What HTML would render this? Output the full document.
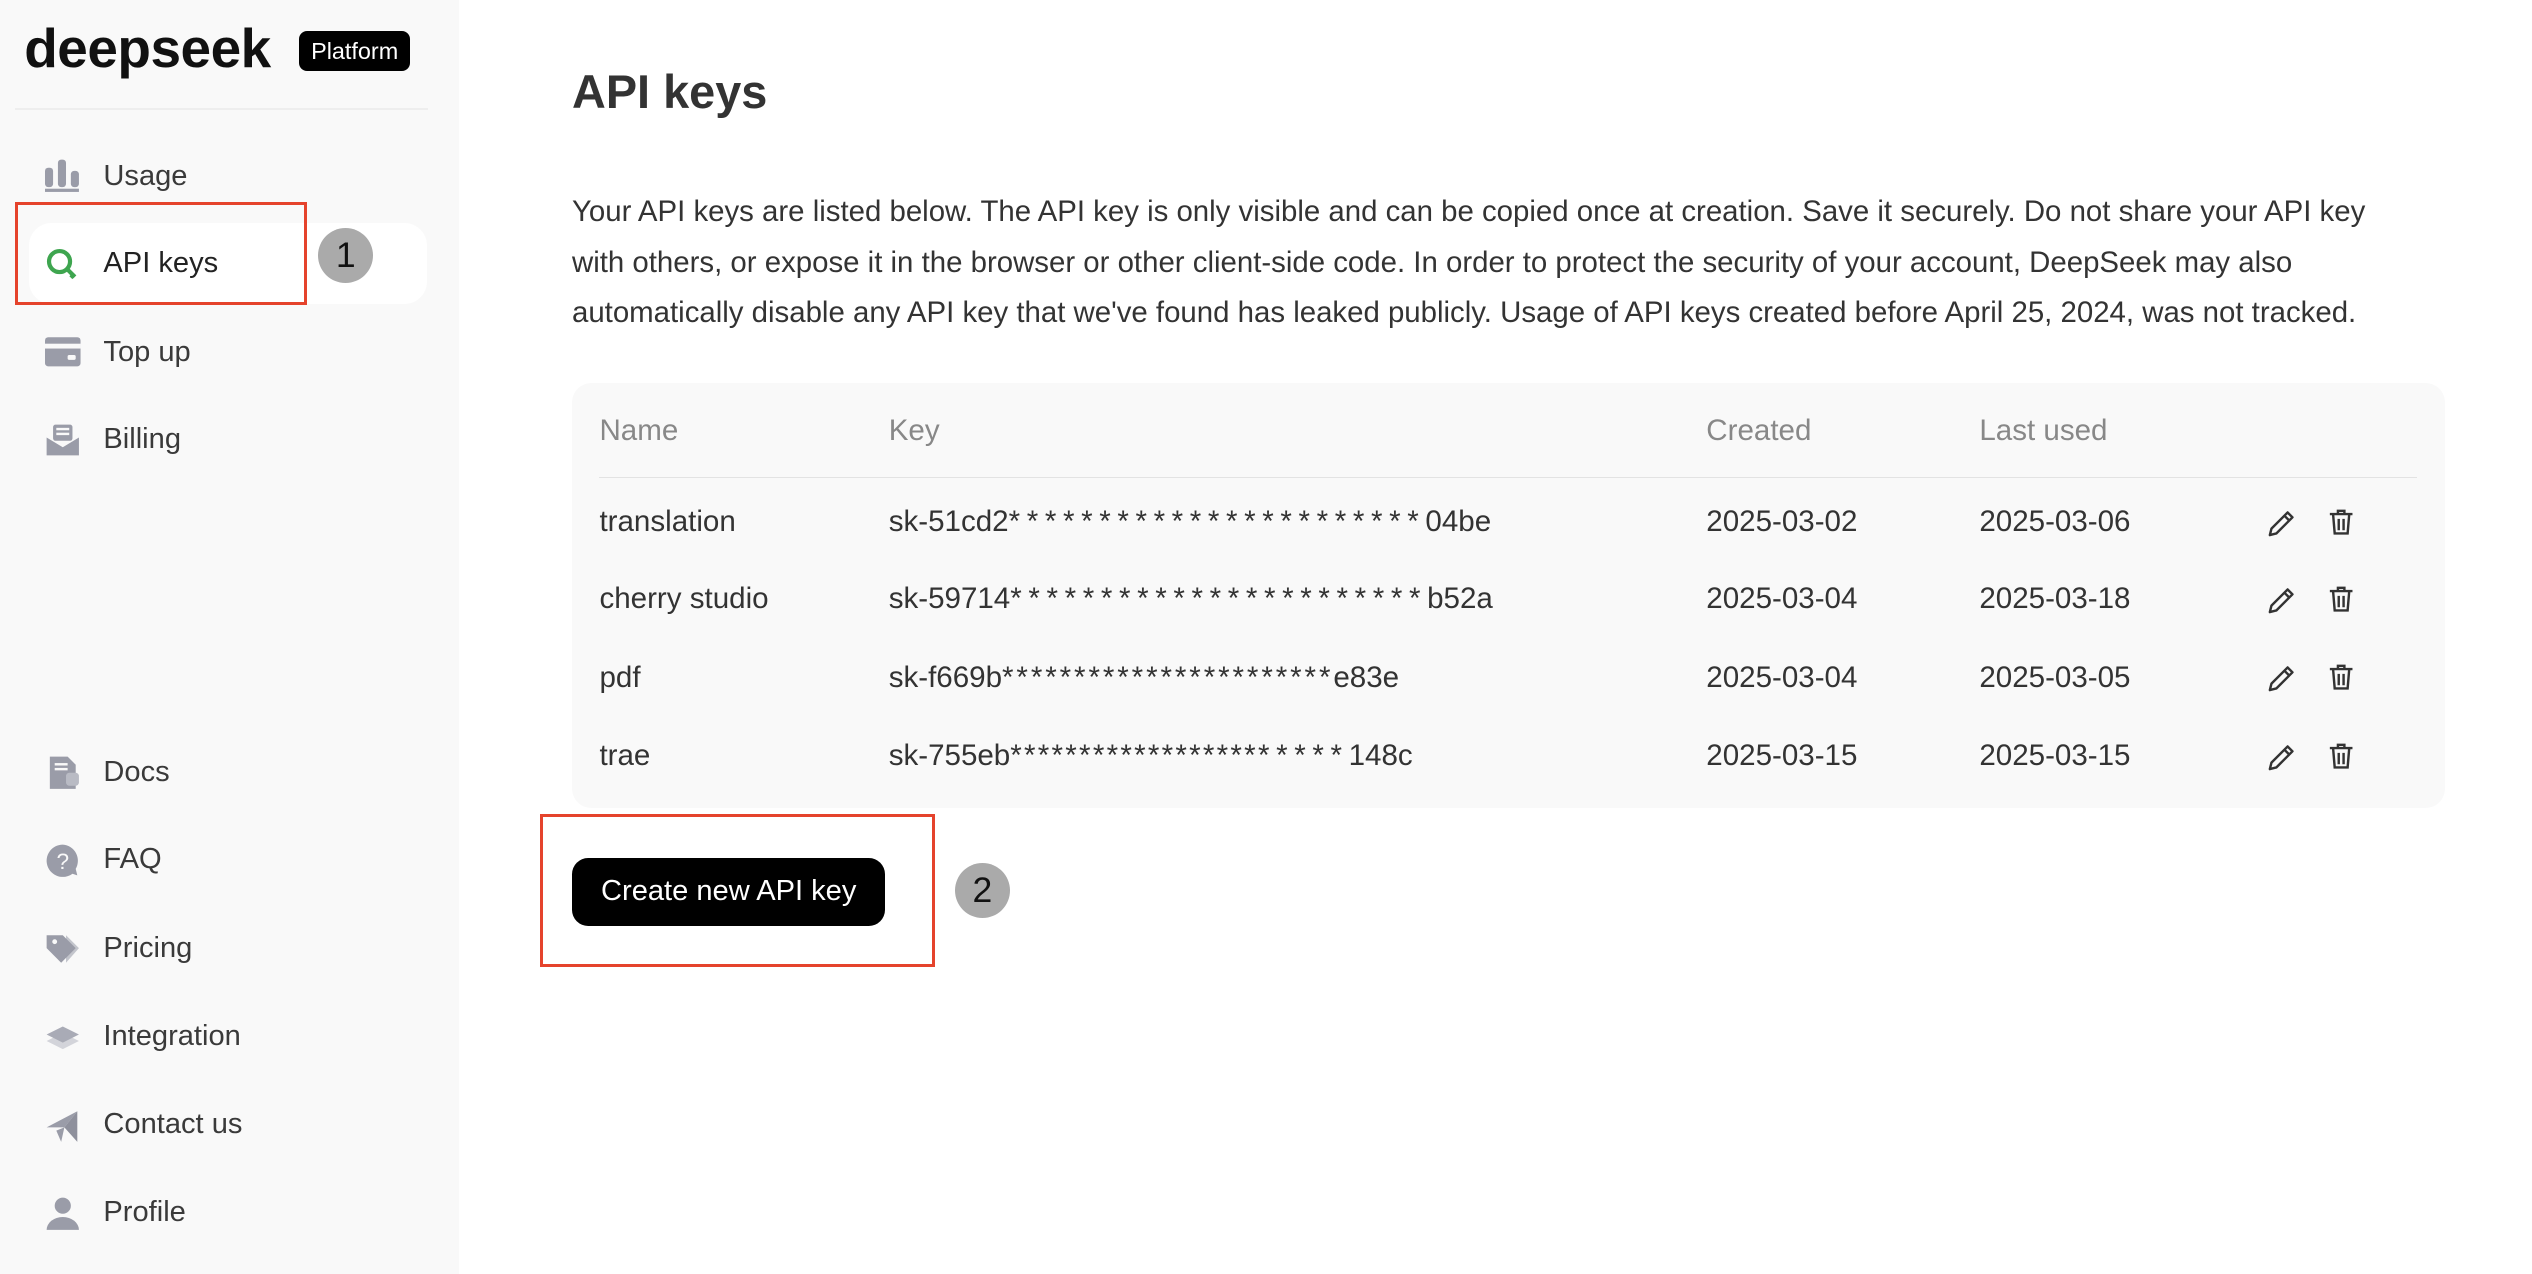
<!DOCTYPE html>
<html><head><meta charset="utf-8"><style>
html,body{margin:0;padding:0;width:2532px;height:1274px;overflow:hidden;background:#fff}
#w{zoom:1.6158;width:1567px;height:789px;position:relative;font-family:"Liberation Sans",sans-serif;color:#333}
.a{position:absolute}
#side{left:0;top:0;width:284px;height:789px;background:#f9f9f9}
.nav{position:absolute;left:64px;font-size:18px;color:#3a3a3a;line-height:20px}
.ic{position:absolute;left:28px;width:22px;height:22px}
.red{position:absolute;border:2px solid #e5432c}
.num{position:absolute;width:34px;height:34px;border-radius:50%;background:#aaa;color:#111;font-size:22px;text-align:center;line-height:34px}
.cell{position:absolute;font-size:18.3px;line-height:20px;color:#333;white-space:nowrap}
.hd{color:#888}
.s{letter-spacing:4.1px}
</style></head><body><div id="w">
<div class="a" id="side"></div>
<div class="a" style="left:15px;top:12px;font-size:34px;font-weight:bold;letter-spacing:-0.3px;color:#111;line-height:36px">deepseek</div>
<div class="a" style="left:185px;top:19px;width:69px;height:25px;background:#000;border-radius:5px;color:#fff;font-size:14.5px;line-height:25px;text-align:center">Platform</div>
<div class="a" style="left:9px;top:67px;width:256px;height:1px;background:#eee"></div>
<div class="a" style="left:18px;top:138px;width:246px;height:50px;background:#fff;border-radius:14px"></div>

<svg class="ic" style="top:98px" viewBox="0 0 22 22" fill="#9a9ca8"><rect x="0" y="6" width="5" height="12" rx="2"/><rect x="8" y="1" width="5" height="17" rx="2"/><rect x="16" y="8" width="5" height="10" rx="2"/><rect x="0" y="19" width="21" height="2"/></svg>
<div class="nav" style="top:99px">Usage</div>
<svg class="ic" style="top:153px" viewBox="0 0 22 22" fill="none" stroke="#3ea54f" stroke-width="2.6"><circle cx="9" cy="9" r="6.5"/><path d="M13.5 13.5l5 5M16 19l2-2"/></svg>
<div class="nav" style="top:153px;color:#222">API keys</div>
<svg class="ic" style="top:207px" viewBox="0 0 22 22" fill="#9a9ca8"><rect x="0" y="2" width="22" height="18" rx="2"/><rect x="0" y="6" width="22" height="3" fill="#f9f9f9"/><rect x="14" y="13" width="5" height="3" rx="1" fill="#f9f9f9"/></svg>
<div class="nav" style="top:208px">Top up</div>
<svg class="ic" style="top:262px" viewBox="0 0 22 22" fill="#9a9ca8"><rect x="5" y="1" width="12" height="10" rx="1.5"/><path d="M1 9l10 6 10-6v11H1z"/><rect x="7" y="3" width="8" height="1.5" fill="#f9f9f9"/><rect x="7" y="6" width="8" height="1.5" fill="#f9f9f9"/></svg>
<div class="nav" style="top:262px">Billing</div>

<svg class="ic" style="top:467px" viewBox="0 0 22 22" fill="#9a9ca8"><path d="M3 1h11l5 5v15H3z"/><rect x="13" y="11" width="8" height="8" rx="2" fill="#b9bbc4"/><rect x="6" y="5" width="8" height="1.5" fill="#f9f9f9"/><rect x="6" y="8" width="8" height="1.5" fill="#f9f9f9"/></svg>
<div class="nav" style="top:468px">Docs</div>
<svg class="ic" style="top:522px" viewBox="0 0 22 22" fill="#9a9ca8"><path d="M11 1a10 10 0 1 0 6 18l3 1-1-4A10 10 0 0 0 11 1z"/><text x="11" y="16" font-size="14" text-anchor="middle" fill="#f9f9f9" font-family="Liberation Sans">?</text></svg>
<div class="nav" style="top:522px">FAQ</div>
<svg class="ic" style="top:577px" viewBox="0 0 22 22" fill="#9a9ca8"><path d="M13 2l8 8-8 9z" fill="#c3c5cc"/><path d="M1 2h10l8 8-9 9-9-9z"/><circle cx="6" cy="6" r="1.5" fill="#f9f9f9"/></svg>
<div class="nav" style="top:577px">Pricing</div>
<svg class="ic" style="top:631px" viewBox="0 0 22 22"><path d="M1 13l10-5 10 5-10 5z" fill="#d3d4da"/><path d="M1 9l10-5 10 5-10 5z" fill="#a9abb6"/></svg>
<div class="nav" style="top:631px">Integration</div>
<svg class="ic" style="top:686px" viewBox="0 0 22 22" fill="#9a9ca8"><path d="M1 12L20 2 12 12z"/><path d="M20 2v19l-8-9z" fill="#8e909c"/><path d="M12 12l-2 9-3-7z"/></svg>
<div class="nav" style="top:686px">Contact us</div>
<svg class="ic" style="top:740px" viewBox="0 0 22 22" fill="#9a9ca8"><circle cx="11" cy="6" r="5"/><path d="M1 21a10 8 0 0 1 20 0z"/></svg>
<div class="nav" style="top:740px">Profile</div>

<div class="red" style="left:9px;top:125px;width:177px;height:60px"></div>
<div class="num" style="left:197px;top:141px">1</div>

<div class="a" style="left:354px;top:39px;font-size:29px;font-weight:bold;color:#333;line-height:36px">API keys</div>
<div class="a" style="left:354px;top:116px;width:1128px;font-size:18.2px;line-height:31px;color:#333">Your API keys are listed below. The API key is only visible and can be copied once at creation. Save it securely. Do not share your API key with others, or expose it in the browser or other client-side code. In order to protect the security of your account, DeepSeek may also automatically disable any API key that we've found has leaked publicly. Usage of API keys created before April 25, 2024, was not tracked.</div>

<div class="a" style="left:354px;top:237px;width:1159px;height:263px;background:#f9f9f9;border-radius:12px"></div>
<div class="cell hd" style="left:371px;top:257px">Name</div>
<div class="cell hd" style="left:550px;top:257px">Key</div>
<div class="cell hd" style="left:1056px;top:257px">Created</div>
<div class="cell hd" style="left:1225px;top:257px">Last used</div>
<div class="a" style="left:371px;top:295px;width:1125px;height:1px;background:#e3e3e3"></div>

<div class="cell" style="left:371px;top:313px">translation</div>
<div class="cell" style="left:550px;top:313px">sk-51cd2<span class="s">***********************</span>04be</div>
<div class="cell" style="left:1056px;top:313px">2025-03-02</div>
<div class="cell" style="left:1225px;top:313px">2025-03-06</div>
<div class="cell" style="left:371px;top:361px">cherry studio</div>
<div class="cell" style="left:550px;top:361px">sk-59714<span class="s">***********************</span>b52a</div>
<div class="cell" style="left:1056px;top:361px">2025-03-04</div>
<div class="cell" style="left:1225px;top:361px">2025-03-18</div>
<div class="cell" style="left:371px;top:410px">pdf</div>
<div class="cell" style="left:550px;top:410px">sk-f669b<span style="letter-spacing:1.8px">***********************</span>e83e</div>
<div class="cell" style="left:1056px;top:410px">2025-03-04</div>
<div class="cell" style="left:1225px;top:410px">2025-03-05</div>
<div class="cell" style="left:371px;top:458px">trae</div>
<div class="cell" style="left:550px;top:458px">sk-755eb<span style="letter-spacing:1.4px">******************</span><span class="s">*****</span>148c</div>
<div class="cell" style="left:1056px;top:458px">2025-03-15</div>
<div class="cell" style="left:1225px;top:458px">2025-03-15</div>

<svg width="0" height="0" style="position:absolute"><defs>
<g id="pen" fill="none" stroke="#333" stroke-width="1.5" stroke-linejoin="round"><path d="M3 18l1-4 10-10 3 3-10 10z M12 6l3 3"/></g>
<g id="bin" fill="none" stroke="#333" stroke-width="1.5"><path d="M3 5h14M8 5V3h4v2M5 5l1 12h8l1-12M8.5 8v7M11.5 8v7"/></g>
</defs></svg>
<svg class="a" style="left:1402px;top:313px" width="20" height="20"><use href="#pen"/></svg>
<svg class="a" style="left:1439px;top:313px" width="20" height="20"><use href="#bin"/></svg>
<svg class="a" style="left:1402px;top:361px" width="20" height="20"><use href="#pen"/></svg>
<svg class="a" style="left:1439px;top:361px" width="20" height="20"><use href="#bin"/></svg>
<svg class="a" style="left:1402px;top:409px" width="20" height="20"><use href="#pen"/></svg>
<svg class="a" style="left:1439px;top:409px" width="20" height="20"><use href="#bin"/></svg>
<svg class="a" style="left:1402px;top:458px" width="20" height="20"><use href="#pen"/></svg>
<svg class="a" style="left:1439px;top:458px" width="20" height="20"><use href="#bin"/></svg>

<div class="a" style="left:354px;top:531px;width:194px;height:42px;background:#000;border-radius:10px;color:#fff;font-size:18px;line-height:42px;text-align:center">Create new API key</div>
<div class="red" style="left:334px;top:504px;width:241px;height:91px"></div>
<div class="num" style="left:591px;top:534px">2</div>
</div></body></html>
